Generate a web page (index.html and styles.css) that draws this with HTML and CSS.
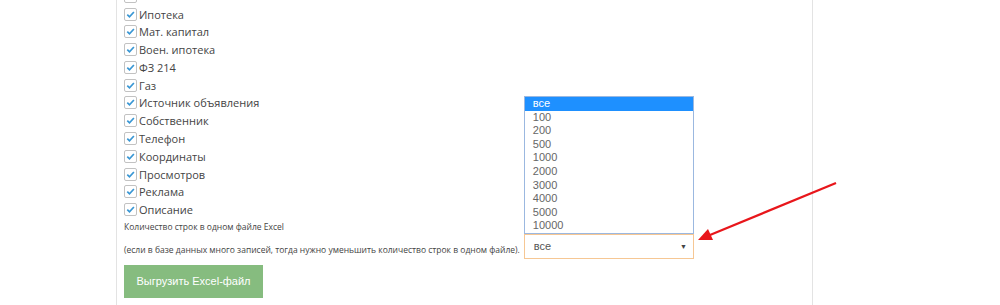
FILE: index.html
```html
<!DOCTYPE html>
<html lang="ru">
<head>
    <meta charset="UTF-8">
    <title>Выгрузка в Excel</title>
    <link rel="stylesheet" href="styles.css">
</head>
<body>
    <div class="panel">
        <div class="checks">
            <label class="check"><span class="box"></span></label>
            <label class="check"><span class="box"></span>Ипотека</label>
            <label class="check"><span class="box"></span>Мат. капитал</label>
            <label class="check"><span class="box"></span>Воен. ипотека</label>
            <label class="check"><span class="box"></span>ФЗ 214</label>
            <label class="check"><span class="box"></span>Газ</label>
            <label class="check"><span class="box"></span>Источник объявления</label>
            <label class="check"><span class="box"></span>Собственник</label>
            <label class="check"><span class="box"></span>Телефон</label>
            <label class="check"><span class="box"></span>Координаты</label>
            <label class="check"><span class="box"></span>Просмотров</label>
            <label class="check"><span class="box"></span>Реклама</label>
            <label class="check"><span class="box"></span>Описание</label>
        </div>

        <p class="hint">Количество строк в одном файле Excel</p>
        <div class="rows-line">
            <span class="hint">(если в базе данных много записей, тогда нужно уменьшить количество строк в одном файле).</span>
            <div class="select">
                <span>все</span>
                <span class="caret">&#9660;</span>
                <ul class="options">
                    <li class="active">все</li>
                    <li>100</li>
                    <li>200</li>
                    <li>500</li>
                    <li>1000</li>
                    <li>2000</li>
                    <li>3000</li>
                    <li>4000</li>
                    <li>5000</li>
                    <li>10000</li>
                </ul>
            </div>
        </div>

        <button class="export-btn" type="button">Выгрузить Excel-файл</button>
    </div>

    <!-- annotation arrow -->
    <svg class="pointer" width="1000" height="305" viewBox="0 0 1000 305">
        <line x1="836" y1="183" x2="710" y2="235" stroke="#e8161b" stroke-width="2.2"/>
        <polygon points="698,240 708,229 713,240" fill="#e8161b"/>
    </svg>
</body>
</html>
```

FILE: styles.css
```css
* {
    margin: 0;
    padding: 0;
    box-sizing: border-box;
}

body {
    background-color: #fff;
    font-family: 'Open Sans', sans-serif;
    color: #444;
    height: 305px;
    overflow: hidden;
    position: relative;
}

.panel {
    margin-left: 116px;
    width: 697px;
    height: 317.7px;
    border-left: 1px solid #e3e3e3;
    border-right: 1px solid #e3e3e3;
    padding-left: 7px;
}

.checks {
    margin-top: -12.7px;
}

.check {
    display: flex;
    align-items: center;
    height: 17.8px;
    font-size: 11px;
    color: #444;
}

.box {
    width: 13px;
    height: 13px;
    margin-right: 2px;
    border: 1px solid #c2c2c2;
    border-radius: 2px;
    background: #fff url("data:image/svg+xml,%3Csvg xmlns='http://www.w3.org/2000/svg' viewBox='0 0 11 11'%3E%3Cpath d='M2.3 5.6l2.2 2.2L8.9 3' fill='none' stroke='%233a97d4' stroke-width='1.7'/%3E%3C/svg%3E") center / 11px 11px no-repeat;
}

.hint {
    font-size: 8.5px;
    line-height: 14px;
    color: #444;
}

p.hint {
    margin-top: 1.3px;
}

.rows-line {
    display: flex;
    align-items: flex-end;
    gap: 4px;
}

.rows-line .hint {
    padding-bottom: 2px;
}

.select {
    position: relative;
    width: 170px;
    height: 25px;
    border: 1px solid #f6c794;
    display: flex;
    align-items: center;
    justify-content: space-between;
    padding: 0 6px 0 9px;
    font-family: 'Liberation Sans', Arial, sans-serif;
    font-size: 11px;
    color: #555;
}

.caret {
    font-size: 7px;
    color: #444;
}

.options {
    position: absolute;
    left: -1px;
    bottom: 24px;
    width: 170px;
    list-style: none;
    border: 1px solid #9bb8e0;
    background: #fff;
}

.options li {
    height: 13.6px;
    line-height: 13.6px;
    padding-left: 8px;
    font-size: 11px;
    color: #666;
}

.options li.active {
    background-color: #1e90ff;
    color: #fff;
}

.export-btn {
    margin-top: 6px;
    width: 139px;
    height: 33px;
    border: none;
    background-color: #86bc7f;
    color: #fff;
    font-family: 'Liberation Sans', Arial, sans-serif;
    font-size: 11px;
    white-space: nowrap;
}

.pointer {
    position: absolute;
    left: 0;
    top: 0;
    pointer-events: none;
}
```
